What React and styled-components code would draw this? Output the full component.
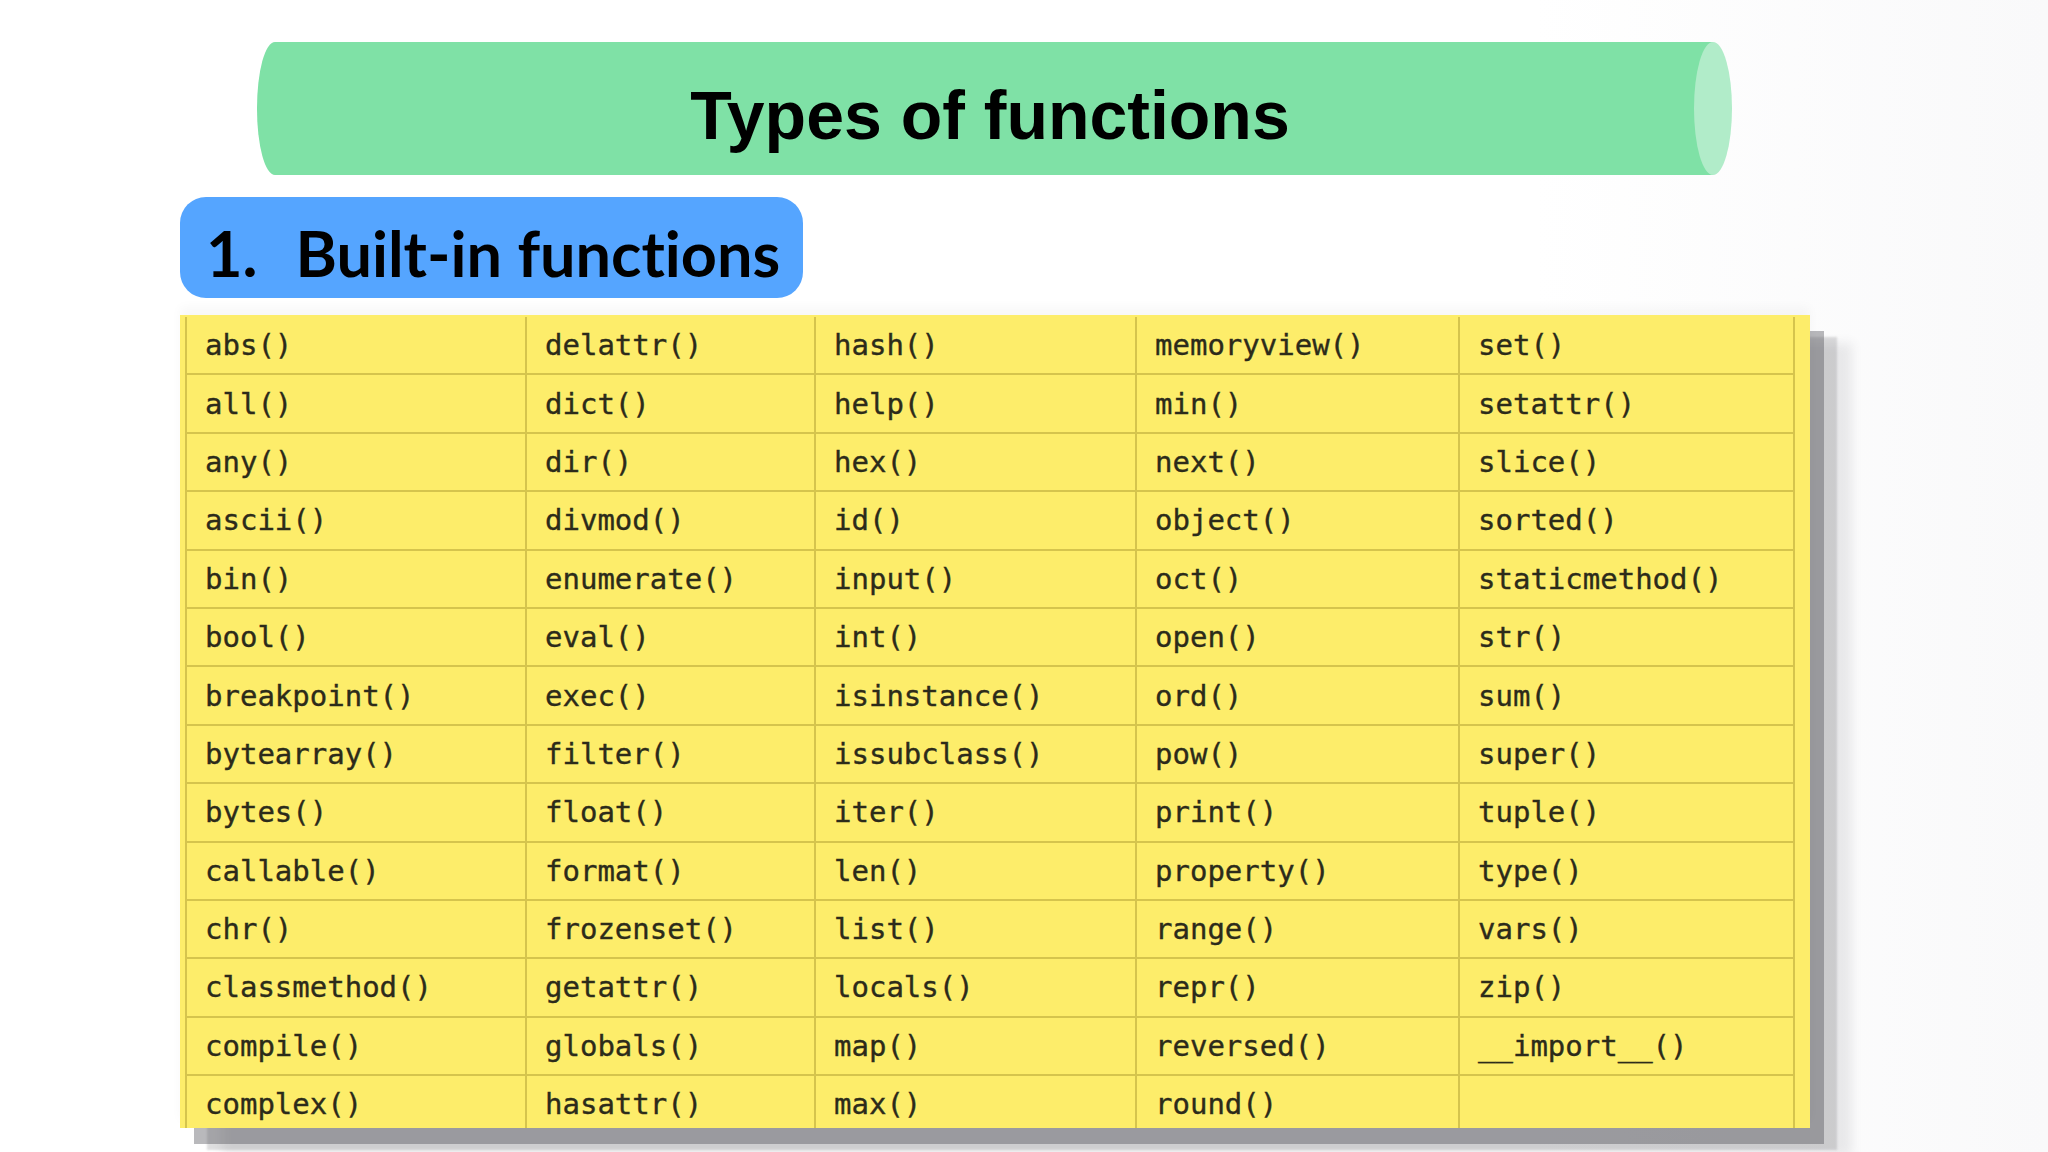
import React from "react";
import styled, { createGlobalStyle } from "styled-components";

const Global = createGlobalStyle`
  html, body { margin: 0; padding: 0; background: #ffffff; }
  #root { width: 2048px; height: 1152px; overflow: hidden; }
`;

const Page = styled.div`
  width: 2048px;
  height: 1152px;
  box-sizing: border-box;
  padding-top: 42px;
  display: flex;
  flex-direction: column;
  align-items: flex-start;
  background: linear-gradient(90deg, #ffffff 0%, #ffffff 75%, #f9f9fa 100%);
`;

const Banner = styled.div`
  position: relative;
  margin-left: 257px;
  width: 1456px;
  height: 133px;
  box-sizing: border-box;
  padding: 12px 0 0 10px;
  background: #7fe1a6;
  border-radius: 18px 0 0 18px / 66px 0 0 66px;
  display: flex;
  align-items: center;
  justify-content: center;

  &::after {
    content: "";
    position: absolute;
    top: 0;
    right: -19px;
    width: 38px;
    height: 100%;
    border-radius: 50%;
    background: #b1ecc9;
  }
`;

const Title = styled.h1`
  margin: 0;
  font-family: "Liberation Sans", Arial, sans-serif;
  font-weight: 700;
  font-size: 68px;
  color: #000;
`;

const Pill = styled.div`
  margin: 22px 0 0 180px;
  width: 623px;
  height: 101px;
  box-sizing: border-box;
  padding: 10px 0 0 26px;
  background: #55a5ff;
  border-radius: 26px;
  display: flex;
  align-items: center;
`;

const SubTitle = styled.h2`
  margin: 0;
  font-family: Lato, "Open Sans", sans-serif;
  font-weight: 700;
  font-size: 63px;
  font-variant-ligatures: none;
  color: #000;
  white-space: nowrap;
`;

const Num = styled.span`
  margin-right: 38px;
`;

const TableWrap = styled.div`
  margin: 17px 0 0 180px;
  width: 1630px;
  height: 813px;
  box-sizing: border-box;
  overflow: hidden;
  background: #fded6a;
  box-shadow: 0 -8px 10px rgba(0, 0, 0, 0.03),
    14px 16px 0 rgba(70, 70, 78, 0.38),
    27px 22px 2px rgba(70, 70, 78, 0.18),
    42px 28px 10px rgba(70, 70, 78, 0.1);
  padding: 2px 15px 0 5px;
`;

const Grid = styled.div`
  display: grid;
  grid-template-columns: 340px 289px 321px 323px 337px;
  grid-auto-rows: 58.4px;
`;

const Cell = styled.div`
  box-sizing: border-box;
  border-left: 2px solid #d5c44d;
  border-right: ${(p) => (p.$last ? "2px solid #d5c44d" : "none")};
  border-bottom: 2px solid #d5c44d;
  padding-left: 18px;
  display: flex;
  align-items: center;
  font-family: "DejaVu Sans Mono", "Liberation Mono", monospace;
  font-size: 29px;
  color: #2c2b1a;
  -webkit-text-stroke: 0.35px #2c2b1a;
  white-space: nowrap;
`;

const columns = [
  ["abs()", "all()", "any()", "ascii()", "bin()", "bool()", "breakpoint()", "bytearray()", "bytes()", "callable()", "chr()", "classmethod()", "compile()", "complex()"],
  ["delattr()", "dict()", "dir()", "divmod()", "enumerate()", "eval()", "exec()", "filter()", "float()", "format()", "frozenset()", "getattr()", "globals()", "hasattr()"],
  ["hash()", "help()", "hex()", "id()", "input()", "int()", "isinstance()", "issubclass()", "iter()", "len()", "list()", "locals()", "map()", "max()"],
  ["memoryview()", "min()", "next()", "object()", "oct()", "open()", "ord()", "pow()", "print()", "property()", "range()", "repr()", "reversed()", "round()"],
  ["set()", "setattr()", "slice()", "sorted()", "staticmethod()", "str()", "sum()", "super()", "tuple()", "type()", "vars()", "zip()", "__import__()", ""],
];

export default function App() {
  const rows = columns[0].map((_, r) => columns.map((c) => c[r]));
  return (
    <>
      <Global />
      <Page>
        <Banner>
          <Title>Types of functions</Title>
        </Banner>
        <Pill>
          <SubTitle>
            <Num>1.</Num>Built-in functions
          </SubTitle>
        </Pill>
        <TableWrap>
          <Grid>
            {rows.map((row, r) =>
              row.map((txt, c) => (
                <Cell key={`${r}-${c}`} $last={c === 4}>
                  {txt}
                </Cell>
              ))
            )}
          </Grid>
        </TableWrap>
      </Page>
    </>
  );
}
